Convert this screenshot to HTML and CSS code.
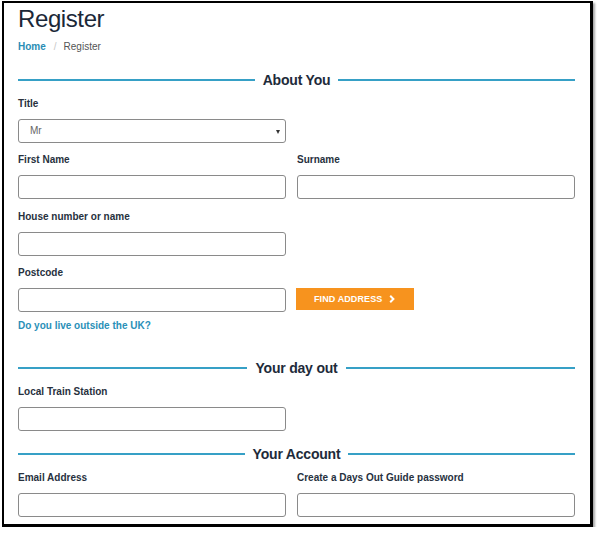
FILE: index.html
```html
<!DOCTYPE html>
<html lang="en">
<head>
<meta charset="utf-8">
<title>Register</title>
<link rel="stylesheet" href="styles.css">
</head>
<body>
<div class="frame">
  <h1 class="page-title">Register</h1>
  <nav class="breadcrumb"><a href="#">Home</a><span class="sep">/</span><span class="current">Register</span></nav>

  <h2 class="section-title st-about"><span>About You</span></h2>
  <div class="field">
    <label>Title</label>
    <div class="select half">Mr</div>
  </div>
  <div class="row">
    <div class="field">
      <label>First Name</label>
      <div class="input"></div>
    </div>
    <div class="field">
      <label>Surname</label>
      <div class="input"></div>
    </div>
  </div>
  <div class="field">
    <label>House number or name</label>
    <div class="input half"></div>
  </div>
  <div class="row">
    <div class="field field-tight">
      <label>Postcode</label>
      <div class="input"></div>
    </div>
    <div class="btn-cell">
      <button class="btn-find">FIND ADDRESS
        <svg width="6" height="8" viewBox="0 0 6 8"><polyline points="1.2,0.8 4.4,4 1.2,7.2" fill="none" stroke="#fff" stroke-width="2"/></svg>
      </button>
    </div>
  </div>
  <a class="link" href="#">Do you live outside the UK?</a>

  <h2 class="section-title st-day"><span>Your day out</span></h2>
  <div class="field">
    <label>Local Train Station</label>
    <div class="input half"></div>
  </div>

  <h2 class="section-title st-account"><span>Your Account</span></h2>
  <div class="row">
    <div class="field">
      <label>Email Address</label>
      <div class="input"></div>
    </div>
    <div class="field">
      <label>Create a Days Out Guide password</label>
      <div class="input"></div>
    </div>
  </div>
</div>
</body>
</html>
```

FILE: styles.css
```css
* { box-sizing: border-box; }
html, body { margin: 0; padding: 0; background: #fff; }
body { font-family: "Liberation Sans", Arial, sans-serif; color: #1e2b3a; }

.frame {
  margin: 1px 0 0 2px;
  width: 591px;
  height: 526px;
  border-style: solid;
  border-color: #000;
  border-width: 2px 3px 3px 2px;
  box-shadow: 2px 2px 2px rgba(0,0,0,0.35);
  padding: 2px 15px 0 14px;
  overflow: hidden;
  background: #fff;
}

.page-title {
  margin: 0;
  font-size: 24px;
  line-height: 28px;
  font-weight: normal;
  letter-spacing: -0.4px;
  color: #1b2838;
}

.breadcrumb {
  margin-top: 7px;
  font-size: 10px;
  line-height: 14px;
}
.breadcrumb a { color: #2a8db5; font-weight: bold; text-decoration: none; }
.breadcrumb .sep { color: #c8c8c8; margin: 0 7px 0 8px; }
.breadcrumb .current { color: #555; }

.section-title {
  display: flex;
  align-items: center;
  gap: 8px;
  margin: 0 0 8px;
  font-size: 14px;
  line-height: 18px;
  font-weight: bold;
  letter-spacing: -0.2px;
  color: #1e2b3a;
}
.section-title::before,
.section-title::after {
  content: "";
  flex: 1;
  height: 2px;
  background: #36a0c6;
}
.st-about { margin-top: 16.5px; }
.st-day { margin-top: 25.5px; }
.st-account { margin-top: 14px; }

.row {
  display: grid;
  grid-template-columns: 268px 278px;
  column-gap: 11px;
}

.field { margin-bottom: 10.5px; }
.field-tight { margin-bottom: 7px; }
.field label {
  display: block;
  font-size: 10px;
  line-height: 14px;
  font-weight: bold;
  color: #27313e;
  margin-bottom: 8px;
}

.input, .select {
  height: 24px;
  border: 1px solid #8a8a8a;
  border-radius: 3px;
  background: #fff;
}
.half { width: 268px; }

.select {
  position: relative;
  font-size: 10px;
  line-height: 22px;
  padding-left: 11px;
  color: #666;
}
.select::after {
  content: "";
  position: absolute;
  right: 5px;
  top: 10px;
  border-left: 2.5px solid transparent;
  border-right: 2.5px solid transparent;
  border-top: 4px solid #333;
}

.btn-cell { padding-top: 21.5px; }
.btn-find {
  display: inline-flex;
  align-items: center;
  gap: 7px;
  height: 22px;
  margin-left: -1px;
  padding: 0 19px 0 18px;
  border: none;
  border-radius: 0;
  background: #f7931e;
  color: #fff;
  font-family: "Liberation Sans", Arial, sans-serif;
  font-size: 9px;
  font-weight: bold;
  letter-spacing: 0.1px;
  cursor: pointer;
}
.btn-find svg { display: block; }

.link {
  display: block;
  font-size: 10px;
  line-height: 14px;
  font-weight: bold;
  color: #2a90b8;
  text-decoration: none;
}
```
